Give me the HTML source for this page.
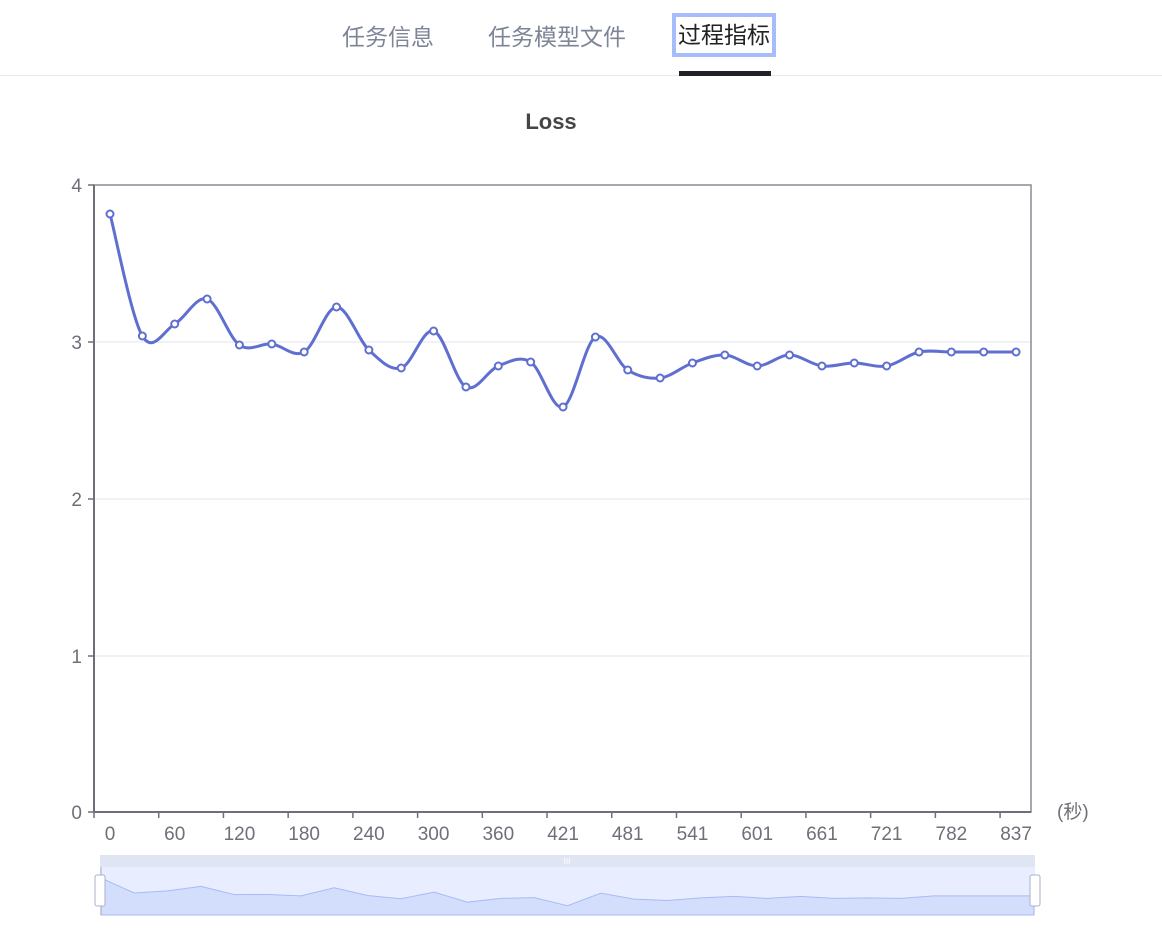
<!DOCTYPE html>
<html><head><meta charset="utf-8"><style>
body{margin:0;width:1162px;height:929px;background:#fff;font-family:"Liberation Sans","Noto Sans CJK SC",sans-serif;overflow:hidden;position:relative}
.tabs{position:absolute;top:0;left:0;width:1162px;height:75px;border-bottom:1px solid #e8e8e8}
.t{position:absolute;top:22px;font-size:23px;color:#7d8597;line-height:30px}
.act{color:#222;outline:4px solid #a7bdfb;background:#fff;padding:0 2px;top:17px;line-height:36px}
.bar{position:absolute;left:679px;top:71px;width:92px;height:5px;background:#202228}
</style></head><body>
<div class="tabs">
<div class="t" style="left:342px">任务信息</div>
<div class="t" style="left:488px">任务模型文件</div>
<div class="t act" style="left:676px">过程指标</div>
<div class="bar"></div>
</div>
<svg id="s" width="1162" height="929" style="position:absolute;left:0;top:0" font-family="Liberation Sans, Noto Sans CJK SC, sans-serif">
<text x="551" y="129" text-anchor="middle" font-size="22" font-weight="bold" fill="#464646">Loss</text>
<g stroke="#e0e6f1" stroke-width="1">
<line x1="94" y1="342" x2="1031" y2="342"/><line x1="94" y1="499" x2="1031" y2="499"/><line x1="94" y1="656" x2="1031" y2="656"/>
</g>
<rect x="94" y="185" width="937" height="627" fill="none" stroke="#8a8a96" stroke-width="1.5"/>
<line x1="94" y1="185" x2="94" y2="812" stroke="#6e7079" stroke-width="2"/>
<line x1="94" y1="812" x2="1031" y2="812" stroke="#6e7079" stroke-width="2"/>
<g font-size="19" fill="#6e7079" text-anchor="end">
<text x="82" y="192">4</text><text x="82" y="349">3</text><text x="82" y="506">2</text><text x="82" y="663">1</text><text x="82" y="819">0</text>
</g>
<g stroke="#6e7079" stroke-width="1.5"><line x1="88" y1="185" x2="94" y2="185"/><line x1="88" y1="342" x2="94" y2="342"/><line x1="88" y1="499" x2="94" y2="499"/><line x1="88" y1="656" x2="94" y2="656"/><line x1="88" y1="812" x2="94" y2="812"/></g>
<g id="xt"></g>
<text x="1057" y="818" font-size="19" fill="#6e7079">(秒)</text>
<path id="ln" fill="none" stroke="#5f6fcf" stroke-width="3"/>
<g id="pts"></g>
<rect x="100" y="855" width="935" height="12" fill="#e0e5f3"/>
<rect x="100" y="867" width="935" height="48" fill="#e8eeff"/>
<path id="mini" fill="#d3defd" stroke="#a8bbf5" stroke-width="1"/>
<line x1="101" y1="867" x2="101" y2="915" stroke="#aab"/>
<text x="567" y="864" font-size="8" fill="#fff" text-anchor="middle">III</text>
<rect x="95" y="875" width="10" height="31" rx="2" fill="#fff" stroke="#aab2c8"/>
<rect x="1030" y="875" width="10" height="31" rx="2" fill="#fff" stroke="#aab2c8"/>
</svg>
<script>
var ys=[214,336,324,299,345,344,352,307,350,368,331,387,366,362,407,337,370,378,363,355,366,355,366,363,366,352,352,352,352];
var lab=[0,60,120,180,240,300,360,421,481,541,601,661,721,782,837];
var P=ys.map(function(y,i){return [110+i*32.36,y]});
var d="M"+P[0];
for(var i=0;i<P.length-1;i++){var p0=P[Math.max(0,i-1)],p1=P[i],p2=P[i+1],p3=P[Math.min(P.length-1,i+2)];
var c1=[p1[0]+(p2[0]-p0[0])/6,p1[1]+(p2[1]-p0[1])/6],c2=[p2[0]-(p3[0]-p1[0])/6,p2[1]-(p3[1]-p1[1])/6];
d+=" C"+c1+" "+c2+" "+p2;}
document.getElementById("ln").setAttribute("d",d);
var ns="http://www.w3.org/2000/svg",g=document.getElementById("pts"),xt=document.getElementById("xt");
P.forEach(function(p){var c=document.createElementNS(ns,"circle");c.setAttribute("cx",p[0]);c.setAttribute("cy",p[1]);c.setAttribute("r",3.5);c.setAttribute("fill","#fff");c.setAttribute("stroke","#5f6fcf");c.setAttribute("stroke-width",2);g.appendChild(c)});
for(var k=0;k<15;k++){var x=94+k*64.72;var l=document.createElementNS(ns,"line");l.setAttribute("x1",x);l.setAttribute("x2",x);l.setAttribute("y1",812);l.setAttribute("y2",818);l.setAttribute("stroke","#6e7079");l.setAttribute("stroke-width",1.5);xt.appendChild(l);
var t=document.createElementNS(ns,"text");t.setAttribute("x",110+k*64.72);t.setAttribute("y",840);t.setAttribute("font-size",19);t.setAttribute("fill","#6e7079");t.setAttribute("text-anchor","middle");t.textContent=lab[k];xt.appendChild(t);}
var m="M101,915";ys.forEach(function(y,i){m+=" L"+(101+i*933/28)+","+(i==0?878:893+(y-336)*0.18)});m+=" L1034,915Z";
document.getElementById("mini").setAttribute("d",m);
</script>
</body></html>
